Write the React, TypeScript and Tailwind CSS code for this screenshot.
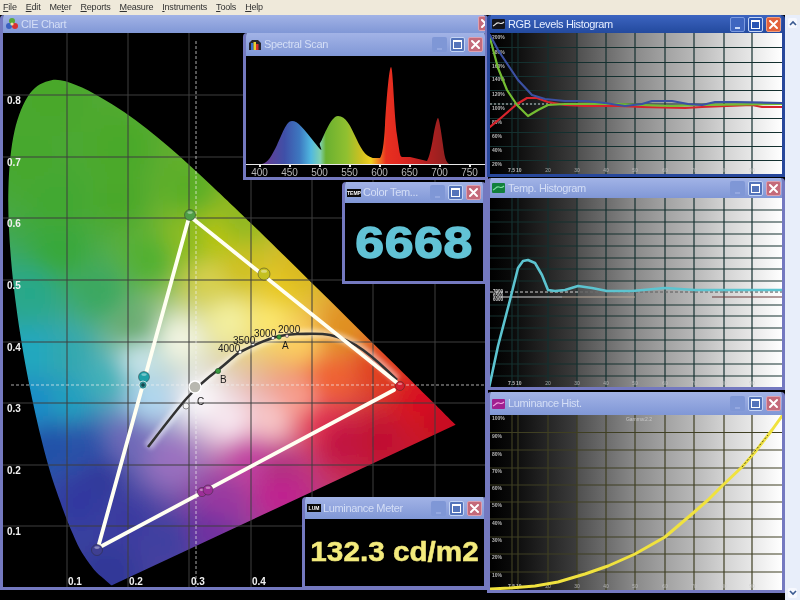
import type { ReactNode } from 'react';

// CIE 1931 spectral locus, as [x, y] chromaticity
const LOCUS = [
  [0.1741, 0.005], [0.1714, 0.0051], [0.1644, 0.0109], [0.1566, 0.0177], [0.144, 0.0297], [0.1241, 0.0578],
  [0.1096, 0.0868], [0.0913, 0.1327], [0.0687, 0.2007], [0.0454, 0.295], [0.0235, 0.4127], [0.0082, 0.5384],
  [0.0039, 0.6548], [0.0139, 0.7502], [0.0389, 0.812], [0.0743, 0.8338], [0.1142, 0.8262], [0.1547, 0.8059],
  [0.1929, 0.7816], [0.2296, 0.7543], [0.2658, 0.7243], [0.3016, 0.6923], [0.3373, 0.6589], [0.3731, 0.6245],
  [0.4441, 0.5547], [0.5125, 0.4866], [0.5752, 0.4242], [0.627, 0.3725], [0.6658, 0.334], [0.6915, 0.3083],
  [0.7079, 0.292], [0.7347, 0.2653],
];

// page px; the top of the picture's horseshoe sits a little lower than the true locus
const locusPx = LOCUS.map(([x, y]) => [6 + x * 612, 588 - y * 615 + Math.min(1, Math.max(0, (y - 0.3) / 0.5)) * 5]);

function smoothClosed(pts: number[][]) {
  const n = pts.length;
  let d = `M${pts[0][0].toFixed(1)} ${pts[0][1].toFixed(1)}`;
  for (let i = 0; i < n; i++) {
    const p0 = pts[Math.max(i - 1, 0)];
    const p1 = pts[i];
    const p2 = pts[(i + 1) % n];
    const p3 = pts[Math.min(i + 2, n - 1)];
    if (i === n - 1) {
      d += `L${p2[0].toFixed(1)} ${p2[1].toFixed(1)}`;
      break;
    }
    const c1 = [p1[0] + (p2[0] - p0[0]) / 6, p1[1] + (p2[1] - p0[1]) / 6];
    const c2 = [p2[0] - (p3[0] - p1[0]) / 6, p2[1] - (p3[1] - p1[1]) / 6];
    d += `C${c1[0].toFixed(1)} ${c1[1].toFixed(1)} ${c2[0].toFixed(1)} ${c2[1].toFixed(1)} ${p2[0].toFixed(1)} ${p2[1].toFixed(1)}`;
  }
  return `${d}Z`;
}
const locusPath = smoothClosed(locusPx);

// colours read off the picture, page px -> colour
const ANCHORS: [number, number, string][] = [
  [50, 100, '#4aa82c'], [120, 150, '#4aa92a'], [120, 200, '#4aa82a'], [60, 200, '#42a830'], [30, 160, '#46a82e'], [60, 250, '#38a83a'],
  [150, 260, '#50b030'], [190, 240, '#8cbc20'], [215, 240, '#b8c410'], [33, 293, '#28a88a'], [100, 293, '#3aa860'],
  [33, 353, '#20a8c0'], [66, 353, '#30a8b0'], [133, 327, '#6aab70'], [33, 403, '#1a8cc8'], [70, 400, '#20a0c0'], [105, 380, '#40b0b8'],
  [50, 447, '#2050a8'], [83, 447, '#2a50a8'], [100, 480, '#30389a'], [140, 360, '#c8e4ea'], [180, 340, '#f4f6e4'],
  [150, 400, '#b0d8f0'], [130, 440, '#7068b8'], [170, 460, '#9a70c0'], [200, 400, '#fbf8fb'], [230, 420, '#f8e8f0'],
  [270, 420, '#f8c8c8'], [300, 400, '#f8a090'], [330, 380, '#f06030'], [300, 340, '#fcd060'], [270, 320, '#fce870'],
  [230, 320, '#f4f0a0'], [210, 280, '#d8d050'], [240, 270, '#d0c020'], [280, 290, '#e8c820'], [340, 330, '#e09020'],
  [380, 370, '#e04020'], [420, 400, '#d81020'], [440, 420, '#c81020'], [340, 440, '#c01040'], [280, 470, '#b03080'],
  [220, 500, '#9838a0'], [170, 540, '#4040a0'], [110, 570, '#303898'], [280, 490, '#c02090'], [210, 530, '#7030a0'],
  [250, 460, '#c040a0'], [320, 420, '#e03050'], [130, 520, '#3a3aa0'], [80, 500, '#3038a0'], [380, 440, '#c01030'],
  [240, 220, '#90b820'], [300, 270, '#d8b820'], [190, 190, '#58ae28'],
];
const anchorRgb = ANCHORS.map(([x, y, c]) => [
  x, y, parseInt(c.slice(1, 3), 16), parseInt(c.slice(3, 5), 16), parseInt(c.slice(5, 7), 16),
]);

function colourAt(px: number, py: number) {
  let sum = 0, r = 0, g = 0, b = 0;
  for (const [x, y, cr, cg, cb] of anchorRgb) {
    const d = (x - px) ** 2 + (y - py) ** 2 + 1;
    const w = 1 / d ** 1.6;
    sum += w; r += cr * w; g += cg * w; b += cb * w;
  }
  return `rgb(${Math.round(r / sum)},${Math.round(g / sum)},${Math.round(b / sum)})`;
}

const CELL = 4;
const cells: { x: number; y: number; fill: string }[] = [];
for (let y = 40; y < 620; y += CELL) {
  for (let x = -20; x < 490; x += CELL) cells.push({ x, y, fill: colourAt(x + 2, y + 2) });
}

function toPath(pts: number[][]) {
  return pts.map(([x, y]) => `${x},${y}`).join(' ');
}

function CloseButton({ active }: { active?: boolean }) {
  return (
    <div className={`flex h-[15px] w-[15px] shrink-0 items-center justify-center rounded-[2px] border ${active ? 'bg-[#e2603a] border-[#f0a080]' : 'bg-[#c46a7a] border-[#dca0b0]'}`}>
      <svg width="11" height="11" viewBox="0 0 11 11">
        <path d="M2 2l7 7M9 2l-7 7" stroke="#fff" strokeWidth="2" strokeLinecap="round" />
      </svg>
    </div>
  );
}

function WinButtons({ active, className, closeOnly }: { active?: boolean; className: string; closeOnly?: boolean }) {
  return (
    <div className={`ml-auto flex gap-[3px] ${className}`}>
      {!closeOnly && (
        <div className={`flex h-[15px] w-[15px] items-end justify-center rounded-[2px] pb-[2px] ${active ? 'bg-[#3f66c0] border border-[#7c9be0]' : 'bg-[#7f97d6]'}`}>
          <div className={`h-[2px] w-[5px] ${active ? 'bg-[#c8d8f8]' : 'bg-[#94a8e0]'}`} />
        </div>
      )}
      {!closeOnly && (
        <div className={`flex h-[15px] w-[15px] items-center justify-center rounded-[2px] border border-[#c4d4f4] ${active ? 'bg-[#2a56b4]' : 'bg-[#5474ba]'}`}>
          <div className="h-[9px] w-[9px] border border-t-2 border-white" />
        </div>
      )}
      <CloseButton active={active} />
    </div>
  );
}

interface WindowProps {
  title: string;
  icon: ReactNode;
  active?: boolean;
  closeOnly?: boolean;
  className: string;
  barClassName: string;
  buttonClassName?: string;
  children: ReactNode;
}

function Window({ title, icon, active, closeOnly, className, barClassName, buttonClassName = 'mr-[2px]', children }: WindowProps) {
  return (
    <section
      className={`absolute flex flex-col overflow-hidden rounded-t-[4px] border-x-[3px] border-b-[3px] ${
        active ? 'border-[#27479b]' : 'border-[#7479c0]'
      } ${className}`}
    >
      <div
        className={`flex shrink-0 items-center pl-[1px] ${barClassName} ${
          active ? 'bg-gradient-to-b from-[#3c64c0] to-[#234a9e] text-[#e6eeff]' : 'bg-gradient-to-b from-[#a2b3e6] to-[#8097d6] text-[#d4def6]'
        }`}
      >
        <span className="flex w-[15px] shrink-0 justify-center">{icon}</span>
        <span className="ml-[2px] whitespace-nowrap text-[11px] leading-none tracking-[-0.35px]">{title}</span>
        <WinButtons active={active} className={buttonClassName} closeOnly={closeOnly} />
      </div>
      <div className="relative min-h-0 flex-1 bg-black">{children}</div>
    </section>
  );
}

function CieIcon() {
  return (
    <svg width="14" height="14" viewBox="0 0 14 14">
      <circle cx="7" cy="4" r="3" fill="#5aa838" />
      <circle cx="4" cy="9" r="3" fill="#3a60c0" />
      <circle cx="10" cy="9" r="3" fill="#d83030" />
      <circle cx="7" cy="7" r="1.6" fill="#f0e0a0" />
    </svg>
  );
}

function SpectralIcon() {
  return (
    <svg width="14" height="12" viewBox="0 0 14 12">
      <path d="M1 11V4l3-3h6l3 3v7z" fill="#26262e" />
      <rect x="3" y="4" width="2.5" height="7" fill="#3a70d0" />
      <rect x="5.5" y="3" width="2.5" height="8" fill="#e8d030" />
      <rect x="8" y="5" width="2.5" height="6" fill="#d83030" />
    </svg>
  );
}

function HistIcon({ bg, line }: { bg: string; line: string }) {
  return (
    <svg width="13" height="10" viewBox="0 0 13 10">
      <rect width="13" height="10" rx="1" fill={bg} />
      <path d="M1 7c3-1 3-4 6-3s2 1 5-1" fill="none" stroke={line} strokeWidth="1.2" />
    </svg>
  );
}

function TagIcon({ label }: { label: string }) {
  return (
    <svg width="14" height="8" viewBox="0 0 14 8">
      <rect width="14" height="8" fill="#0a0a0a" />
      <text x="7" y="6" textAnchor="middle" fontSize="5" fontWeight="700" fill="#fff">{label}</text>
    </svg>
  );
}

function Bead({ x, y, r = 5, fill }: { x: number; y: number; r?: number; fill: string }) {
  return (
    <g>
      <circle cx={x} cy={y} r={r} fill={fill} stroke="#2a2a2a" strokeOpacity="0.55" strokeWidth="0.8" />
      <ellipse cx={x} cy={y - r * 0.45} rx={r * 0.5} ry={r * 0.25} fill="#fff" opacity="0.4" />
    </g>
  );
}

function CieChart() {
  const yLabels = [['0.8', 104], ['0.7', 166], ['0.6', 227], ['0.5', 289], ['0.4', 351], ['0.3', 412], ['0.2', 474], ['0.1', 535]] as const;
  const xLabels = [['0.1', 68], ['0.2', 129], ['0.3', 191], ['0.4', 252]] as const;
  const curve = 'M148 447C165 425 178 408 187 398S210 376 218 370S236 354 240 352S262 341 273 338S285 334 297 334S320 333 330 335S352 342 363 350S385 368 397 380';
  return (
    <svg className="block h-full w-full" viewBox="3 33 482 554" preserveAspectRatio="none">
      <defs>
        <clipPath id="locus"><path d={locusPath} /></clipPath>
        <filter id="soft" filterUnits="userSpaceOnUse" x="-20" y="40" width="510" height="580"><feGaussianBlur stdDeviation="9" /></filter>
        <filter id="glow"><feGaussianBlur stdDeviation="2.2" /></filter>
        <filter id="fine"><feGaussianBlur stdDeviation="0.5" /></filter>
      </defs>
      <rect x="3" y="33" width="482" height="554" fill="#000" />
      <g clipPath="url(#locus)">
        <g filter="url(#soft)">
          {cells.map((c) => (
            <rect key={`${c.x}-${c.y}`} x={c.x} y={c.y} width={CELL + 0.5} height={CELL + 0.5} fill={c.fill} />
          ))}
        </g>
      </g>
      <g stroke="#3e3e3e" strokeWidth="1">
        {[67, 128, 189, 251, 312, 373, 435].map((x) => <line key={x} x1={x} y1="33" x2={x} y2="587" />)}
        {[95, 157, 218, 280, 342, 403, 465, 526].map((y) => <line key={y} x1="3" y1={y} x2="485" y2={y} />)}
      </g>
      <g stroke="#f4f4f4" strokeWidth="1" strokeDasharray="3 2" opacity="0.7">
        <line x1="196" y1="41" x2="196" y2="587" />
        <line x1="11" y1="385" x2="485" y2="385" />
      </g>
      <path d={curve} fill="none" stroke="#fff" strokeWidth="9" opacity="0.45" filter="url(#glow)" />
      <path d={curve} fill="none" stroke="#333" strokeWidth="2.6" filter="url(#fine)" />
      <g stroke="#fffff2" strokeWidth="3.8" fill="none" strokeLinecap="round" filter="url(#fine)">
        <line x1="192" y1="218" x2="396" y2="382" />
        <line x1="394" y1="390" x2="100" y2="547" />
        <line x1="99" y1="544" x2="188" y2="221" />
      </g>
      <Bead x={190} y={215} r={5.5} fill="#4e9e46" />
      <Bead x={264} y={274} r={6} fill="#c4c020" />
      <Bead x={144} y={377} r={5.5} fill="#1fa0a8" />
      <circle cx={143} cy={385} r={4} fill="#2a8a90" stroke="#e8f4f4" strokeWidth="0.8" />
      <path d="M141 385h4M143 383v4" stroke="#10202a" strokeWidth="0.8" />
      <circle cx={195} cy={387} r={6} fill="#b8b8b0" stroke="#fff" strokeWidth="1.4" />
      <circle cx={186} cy={406} r={3} fill="#f4f4f4" stroke="#666" strokeWidth="0.7" />
      <Bead x={202} y={492} r={4.6} fill="#9c2f98" />
      <Bead x={208} y={490} r={5} fill="#9c2f98" />
      <Bead x={97} y={550} r={5.5} fill="#3f3f92" />
      <Bead x={400} y={386} r={4.5} fill="#d42030" />
      <circle cx={218} cy={371} r={2.6} fill="#3a9a40" stroke="#1a4a20" strokeWidth="0.6" />
      <circle cx={279} cy={337} r={2.2} fill="#3a9a40" stroke="#1a4a20" strokeWidth="0.6" />
      <circle cx={287} cy={336} r={1.6} fill="#f4d0d0" stroke="#444" strokeWidth="0.5" />
      <circle cx={273} cy={338} r={1.6} fill="#fff" stroke="#444" strokeWidth="0.5" />
      <circle cx={253} cy={344} r={1.6} fill="#fff" stroke="#444" strokeWidth="0.5" />
      <circle cx={240} cy={352} r={1.8} fill="#fff" stroke="#444" strokeWidth="0.5" />
      <g fontSize="10" fill="#1a1a1a">
        <text x="278" y="333">2000</text>
        <text x="254" y="337">3000</text>
        <text x="233" y="344">3500</text>
        <text x="218" y="352">4000</text>
        <text x="282" y="349">A</text>
        <text x="220" y="383">B</text>
        <text x="197" y="405">C</text>
      </g>
      <g fontSize="10" fontWeight="700" fill="#f0f0f0">
        {yLabels.map(([t, y]) => <text key={y} x="7" y={y}>{t}</text>)}
        {xLabels.map(([t, x]) => <text key={x} x={x} y="585">{t}</text>)}
      </g>
    </svg>
  );
}

function SpectralChart() {
  const outline = 'M262 164C268 163 272 155 277 145S286 121 292 121S303 128 315 143S318 144 320 143S330 116 338 116S350 125 357 140S368 156 373 158H380C382 156 384 145 385 125S389 67 391 67S394 115 397 135S400 156 402 157H410L427 161C429 157 431 150 433 138S437 118 438 118S441 130 443 145S446 161 449 164Z';
  const ticks = [400, 450, 500, 550, 600, 650, 700, 750];
  return (
    <svg className="block h-full w-full" viewBox="246 56 239 121" preserveAspectRatio="none">
      <defs>
        <linearGradient id="rainbow" gradientUnits="userSpaceOnUse" x1="262" y1="0" x2="450" y2="0">
          <stop offset="0" stopColor="#6a3a90" />
          <stop offset="0.12" stopColor="#3f50a8" />
          <stop offset="0.2" stopColor="#3d78c0" />
          <stop offset="0.26" stopColor="#50b8e0" />
          <stop offset="0.31" stopColor="#7fd0b0" />
          <stop offset="0.34" stopColor="#6ab030" />
          <stop offset="0.45" stopColor="#90c030" />
          <stop offset="0.53" stopColor="#d0c020" />
          <stop offset="0.58" stopColor="#f0d020" />
          <stop offset="0.62" stopColor="#f08020" />
          <stop offset="0.66" stopColor="#e83020" />
          <stop offset="0.74" stopColor="#e02820" />
          <stop offset="0.84" stopColor="#c02020" />
          <stop offset="1" stopColor="#8a2020" />
        </linearGradient>
      </defs>
      <path d={outline} fill="url(#rainbow)" />
      <line x1="246" y1="164.5" x2="485" y2="164.5" stroke="#e8e8e8" strokeWidth="1" />
      <g fill="#e8e8e8">
        {ticks.map((t) => <rect key={t} x={259 + (t - 400) * 0.6} y="165" width="2" height="2" />)}
      </g>
      <g fontSize="10" fill="#b8b8b8" textAnchor="middle">
        {ticks.map((t) => <text key={t} x={259.5 + (t - 400) * 0.6} y="176">{t}</text>)}
      </g>
    </svg>
  );
}

const X_LINES = [22, 28, 58, 87, 116, 145, 175, 204, 234, 262];
const X_LABELS = [['20', 58], ['30', 87], ['40', 116], ['50', 145], ['60', 175], ['70', 204], ['80', 234], ['90', 262]] as const;

interface HistogramProps {
  id: string;
  height: number;
  hLines: number[];
  grid: string;
  labels: [string, number][];
  children: ReactNode;
}

function Histogram({ id, height, hLines, grid, labels, children }: HistogramProps) {
  return (
    <svg className="block h-full w-full" viewBox={`0 0 292 ${height}`} preserveAspectRatio="none">
      <defs>
        <linearGradient id={id} x1="0" y1="0" x2="1" y2="0">
          <stop offset="0" stopColor="#000" />
          <stop offset="0.075" stopColor="#0a0a0a" />
          <stop offset="0.2" stopColor="#262626" />
          <stop offset="0.297" stopColor="#3c3c3c" />
          <stop offset="0.3" stopColor="#505050" />
          <stop offset="0.397" stopColor="#6c6c6c" />
          <stop offset="0.497" stopColor="#8a8a8a" />
          <stop offset="0.6" stopColor="#a2a2a2" />
          <stop offset="0.7" stopColor="#b8b8b8" />
          <stop offset="0.8" stopColor="#d2d2d2" />
          <stop offset="0.9" stopColor="#e8e8e8" />
          <stop offset="1" stopColor="#fff" />
        </linearGradient>
      </defs>
      <rect width="292" height={height} fill={`url(#${id})`} />
      <g stroke={grid} strokeWidth="1.2">
        {X_LINES.map((x) => <line key={x} x1={x} y1="0" x2={x} y2={height} />)}
        {hLines.map((y) => <line key={y} x1="0" y1={y} x2="292" y2={y} />)}
      </g>
      <g fontSize="5" fill="#b8b8b8" fontWeight="700">
        {labels.map(([t, y]) => <text key={t} x="2" y={y + 2}>{t}</text>)}
        <text x="18" y={height - 2}>7.5</text>
        <text x="26" y={height - 2}>10</text>
      </g>
      <g fontSize="5" fill="#c8c8c8" opacity="0.8" textAnchor="middle">
        {X_LABELS.map(([t, x]) => <text key={t} x={x} y={height - 2}>{t}</text>)}
      </g>
      {children}
    </svg>
  );
}

const RGB_RED = [[0, 94], [12, 84], [27, 71], [37, 65], [47, 65], [58, 69], [75, 72], [95, 73], [128, 73], [152, 74], [195, 75], [212, 74], [262, 72], [272, 74], [292, 74]];
const RGB_GREEN = [[0, 5], [8, 35], [17, 57], [27, 72], [38, 83], [48, 77], [58, 72], [75, 71], [95, 71], [128, 71], [152, 72], [182, 73], [208, 72], [292, 71]];
const RGB_BLUE = [[0, 2], [8, 17], [18, 32], [28, 47], [42, 62], [55, 66], [75, 68], [95, 68], [115, 70], [135, 73], [152, 71], [162, 68], [182, 68], [198, 71], [212, 72], [225, 69], [245, 69], [292, 70]];
const TEMP_CURVE = [[-1, 190], [8, 148], [20, 102], [28, 70], [33, 63], [38, 62], [45, 65], [52, 77], [58, 92], [65, 93], [75, 92], [88, 88], [102, 90], [117, 93], [142, 93], [175, 90], [205, 92], [292, 92]];
const LUM_CURVE = [[0, 174], [20, 173], [45, 171], [68, 167], [95, 159], [118, 151], [145, 139], [175, 122], [202, 99], [218, 85], [233, 70], [252, 52], [265, 37], [282, 15], [292, 1]];

function Line({ pts, color, width }: { pts: number[][]; color: string; width: number }) {
  return <polyline points={toPath(pts)} fill="none" stroke={color} strokeWidth={width} strokeLinejoin="round" strokeLinecap="round" />;
}

export default function App() {
  const menu = [
    ['', 'F', 'ile'], ['', 'E', 'dit'], ['Me', 't', 'er'], ['', 'R', 'eports'],
    ['', 'M', 'easure'], ['', 'I', 'nstruments'], ['', 'T', 'ools'], ['', 'H', 'elp'],
  ];
  return (
    <div className="flex h-[600px] w-[800px] flex-col overflow-hidden bg-black blur-[0.3px] font-['Liberation_Sans',Arial,sans-serif]">
      <header className="flex h-[15px] shrink-0 items-center gap-[9px] bg-[#efe9da] pl-[3px] text-[9px] leading-none tracking-[-0.2px] text-[#333]">
        {menu.map(([a, u, b]) => (
          <span key={u + b}>{a}<span className="underline">{u}</span>{b}</span>
        ))}
      </header>
      <main className="flex min-h-0 flex-1">
        <div className="relative min-w-0 flex-1 bg-black">
          <Window
            closeOnly
            title="CIE Chart"
            icon={<CieIcon />}
            className="left-0 top-0 h-[575px] w-[488px]"
            barClassName="h-[18px]"
            buttonClassName="-mr-[8px] -mt-[2px]"
          >
            <CieChart />
          </Window>

          <Window
            title="Spectral Scan"
            icon={<SpectralIcon />}
            className="left-[243px] top-[18px] h-[147px] w-[245px]"
            barClassName="h-[23px]"
          >
            <SpectralChart />
          </Window>

          <Window
            title="Color Tem..."
            icon={<TagIcon label="TEMP" />}
            className="left-[342px] top-[167px] h-[102px] w-[144px]"
            barClassName="h-[21px]"
            buttonClassName="mr-[2px]"
          >
            <div className="flex h-full items-center justify-center">
              <span className="scale-x-[1.15] text-[45px] font-bold leading-none tracking-[0.5px] text-[#62c3d6] [-webkit-text-stroke:1.4px_#62c3d6]">6668</span>
            </div>
          </Window>

          <Window
            title="Luminance Meter"
            icon={<TagIcon label="LUM" />}
            className="left-[302px] top-[482px] h-[92px] w-[185px]"
            barClassName="h-[22px]"
            buttonClassName="mr-[2px]"
          >
            <div className="flex h-full items-center justify-center">
              <span className="scale-x-[1.1] whitespace-nowrap text-[27px] font-bold leading-none text-[#f3ea7c] [-webkit-text-stroke:0.5px_#f3ea7c]">132.3 cd/m2</span>
            </div>
          </Window>

          <Window
            active
            title="RGB Levels Histogram"
            icon={<HistIcon bg="#14141c" line="#e0e0e0" />}
            className="left-[487px] top-0 h-[162px] w-[298px]"
            barClassName="h-[18px]"
            buttonClassName="mr-[1px]"
          >
            <Histogram
              id="rgbShade"
              height={141}
              grid="#14302f"
              hLines={[14.5, 29.5, 43.5, 57.5, 71, 85.5, 99.5, 113.5, 127.5]}
              labels={[['200%', 4], ['180%', 19], ['160%', 33], ['140%', 46], ['120%', 61], ['100%', 75], ['80%', 89], ['60%', 103], ['40%', 117], ['20%', 131]]}
            >
              <line x1="0" y1="71" x2="70" y2="71" stroke="#fff" strokeWidth="0.8" strokeDasharray="2 2" />
              <Line pts={RGB_RED} color="#d8242c" width={2.2} />
              <Line pts={RGB_GREEN} color="#74bd32" width={2.2} />
              <Line pts={RGB_BLUE} color="#3b50a2" width={2.2} />
            </Histogram>
          </Window>

          <Window
            title="Temp. Histogram"
            icon={<HistIcon bg="#12803c" line="#7ce0a0" />}
            className="left-[487px] top-[163px] h-[212px] w-[298px]"
            barClassName="h-[20px]"
            buttonClassName="mr-[1px]"
          >
            <Histogram
              id="tempShade"
              height={189}
              grid="#14302f"
              hLines={[12, 24, 36, 48, 60, 71, 83, 107, 118, 130, 142, 153, 166, 178]}
              labels={[]}
            >
              <g fontSize="4.5" fill="#d8d8d8" fontWeight="700">
                <text x="3" y="95">7000</text>
                <text x="3" y="99">6500</text>
                <text x="3" y="103">6000</text>
              </g>
              <line x1="0" y1="94" x2="292" y2="94" stroke="#fff" strokeWidth="0.8" strokeDasharray="3 2" />
              <line x1="90" y1="94" x2="292" y2="94" stroke="#111" strokeWidth="0.8" strokeDasharray="3 2" />
              <line x1="10" y1="99" x2="72" y2="99" stroke="#d8d8d8" strokeWidth="1.2" />
              <line x1="72" y1="99" x2="145" y2="99" stroke="#b8a898" strokeWidth="1.2" />
              <line x1="222" y1="99" x2="292" y2="99" stroke="#6a3a3a" strokeWidth="1.2" />
              <Line pts={TEMP_CURVE} color="#5cc4d0" width={2.6} />
            </Histogram>
          </Window>

          <Window
            title="Luminance Hist."
            icon={<HistIcon bg="#a02090" line="#f0a0e0" />}
            className="left-[487px] top-[377px] h-[201px] w-[298px]"
            barClassName="h-[23px]"
            buttonClassName="mr-[1px]"
          >
            <Histogram
              id="lumShade"
              height={175}
              grid="#3f3f22"
              hLines={[17.5, 35, 53, 70, 87, 104, 122, 139, 157]}
              labels={[['100%', 3], ['90%', 21], ['80%', 39], ['70%', 56], ['60%', 73], ['50%', 90], ['40%', 108], ['30%', 125], ['20%', 142], ['10%', 160]]}
            >
              <text x="149" y="6" fontSize="5" fill="#c8c8c8" textAnchor="middle">Gamma:2.2</text>
              <Line pts={LUM_CURVE} color="#f0e23e" width={3} />
              <line x1="252" y1="52" x2="278" y2="20" stroke="#222" strokeWidth="0.8" strokeDasharray="2 2" />
            </Histogram>
          </Window>
        </div>

        <aside className="flex w-[15px] shrink-0 flex-col items-center justify-between bg-[#e8eefa] px-[3px] pb-[2px] pt-[3px]">
          <div className="flex h-[10px] w-[9px] items-center justify-center rounded-[2px] bg-[#f6f8fe]">
            <svg width="8" height="6" viewBox="0 0 8 6"><path d="M1 5l3-3 3 3" fill="none" stroke="#3a5a90" strokeWidth="1.6" /></svg>
          </div>
          <div className="flex h-[10px] w-[9px] items-center justify-center rounded-[2px] bg-[#f6f8fe]">
            <svg width="8" height="6" viewBox="0 0 8 6"><path d="M1 1l3 3 3-3" fill="none" stroke="#3a5a90" strokeWidth="1.6" /></svg>
          </div>
        </aside>
      </main>
    </div>
  );
}
